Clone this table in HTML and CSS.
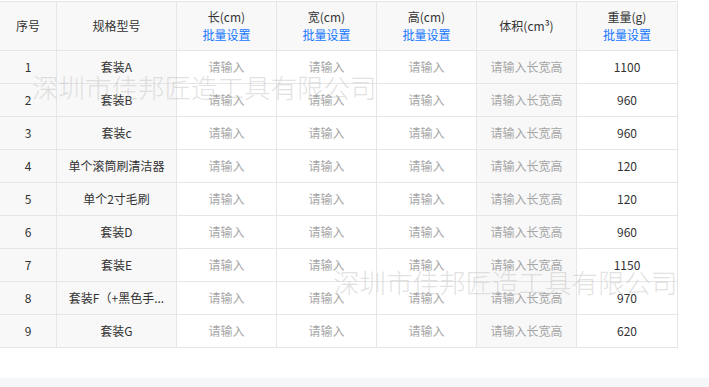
FILE: index.html
```html
<!DOCTYPE html>
<html lang="zh">
<head>
<meta charset="utf-8">
<link rel="stylesheet" href="styles.css">
</head>
<body>
<div class="page">
  <div class="table-wrap">
    <table class="spec">
      <colgroup>
        <col class="c-idx"><col class="c-name"><col class="c-num"><col class="c-num"><col class="c-num"><col class="c-num"><col class="c-wt">
      </colgroup>
      <thead>
        <tr>
          <th>序号</th>
          <th>规格型号</th>
          <th><div>长(cm)</div><a class="batch">批量设置</a></th>
          <th><div>宽(cm)</div><a class="batch">批量设置</a></th>
          <th><div>高(cm)</div><a class="batch">批量设置</a></th>
          <th class="vol-h">体积(cm³)</th>
          <th><div>重量(g)</div><a class="batch">批量设置</a></th>
        </tr>
      </thead>
      <tbody>
        <tr><td class="g">1</td><td class="g">套装A</td><td class="ph">请输入</td><td class="ph">请输入</td><td class="ph">请输入</td><td class="g ph">请输入长宽高</td><td>1100</td></tr>
        <tr><td class="g">2</td><td class="g">套装B</td><td class="ph">请输入</td><td class="ph">请输入</td><td class="ph">请输入</td><td class="g ph">请输入长宽高</td><td>960</td></tr>
        <tr><td class="g">3</td><td class="g">套装c</td><td class="ph">请输入</td><td class="ph">请输入</td><td class="ph">请输入</td><td class="g ph">请输入长宽高</td><td>960</td></tr>
        <tr><td class="g">4</td><td class="g">单个滚筒刷清洁器</td><td class="ph">请输入</td><td class="ph">请输入</td><td class="ph">请输入</td><td class="g ph">请输入长宽高</td><td>120</td></tr>
        <tr><td class="g">5</td><td class="g">单个2寸毛刷</td><td class="ph">请输入</td><td class="ph">请输入</td><td class="ph">请输入</td><td class="g ph">请输入长宽高</td><td>120</td></tr>
        <tr><td class="g">6</td><td class="g">套装D</td><td class="ph">请输入</td><td class="ph">请输入</td><td class="ph">请输入</td><td class="g ph">请输入长宽高</td><td>960</td></tr>
        <tr><td class="g">7</td><td class="g">套装E</td><td class="ph">请输入</td><td class="ph">请输入</td><td class="ph">请输入</td><td class="g ph">请输入长宽高</td><td>1150</td></tr>
        <tr><td class="g">8</td><td class="g" title="套装F（+黑色手柄）">套装F（+黑色手...</td><td class="ph">请输入</td><td class="ph">请输入</td><td class="ph">请输入</td><td class="g ph">请输入长宽高</td><td>970</td></tr>
        <tr><td class="g">9</td><td class="g">套装G</td><td class="ph">请输入</td><td class="ph">请输入</td><td class="ph">请输入</td><td class="g ph">请输入长宽高</td><td>620</td></tr>
      </tbody>
    </table>
    <div class="wm wm1">深圳市佳邦匠造工具有限公司</div>
    <div class="wm wm2">深圳市佳邦匠造工具有限公司</div>
  </div>
  <div class="footer-strip"></div>
</div>
</body>
</html>
```

FILE: styles.css
```css
html, body {
  margin: 0;
  padding: 0;
  background: #fff;
}
body {
  font-family: "Microsoft YaHei", "Noto Sans CJK SC", "Noto Sans", sans-serif;
  font-size: 12px;
  color: #333;
  width: 709px;
  height: 387px;
  overflow: hidden;
}
.page {
  padding-top: 1px;
}
.table-wrap {
  position: relative;
  height: 377px;
}
.spec {
  border-collapse: separate;
  border-spacing: 0;
  table-layout: fixed;
  width: 677px;
  border-top: 1px solid #e6e6e6;
}
.c-idx { width: 57px; }
.c-name { width: 120px; }
.c-num { width: 100px; }
.c-wt { width: 101px; }
.spec th, .spec td {
  border-right: 1px solid #e6e6e6;
  border-bottom: 1px solid #e6e6e6;
  text-align: center;
  padding: 0 4px;
  white-space: nowrap;
  overflow: hidden;
  line-height: 18px;
}
.spec th {
  background: #f8f8f8;
  font-weight: normal;
  color: #333;
  box-sizing: border-box;
  height: 49px;
}
.spec td {
  height: 33px;
  box-sizing: border-box;
}
.spec td.g { background: #f8f8f8; }
.spec td.ph { color: #a6a6a6; }
.batch {
  color: #1677ff;
  display: block;
}
.wm {
  position: absolute;
  font-size: 26.5px;
  font-weight: 300;
  line-height: 30px;
  color: rgba(190, 190, 190, 0.45);
  white-space: nowrap;
  pointer-events: none;
}
.wm1 { left: 32px; top: 71px; }
.wm2 { left: 333px; top: 266px; }
.footer-strip {
  height: 9px;
  background: #f5f6f8;
}
```
